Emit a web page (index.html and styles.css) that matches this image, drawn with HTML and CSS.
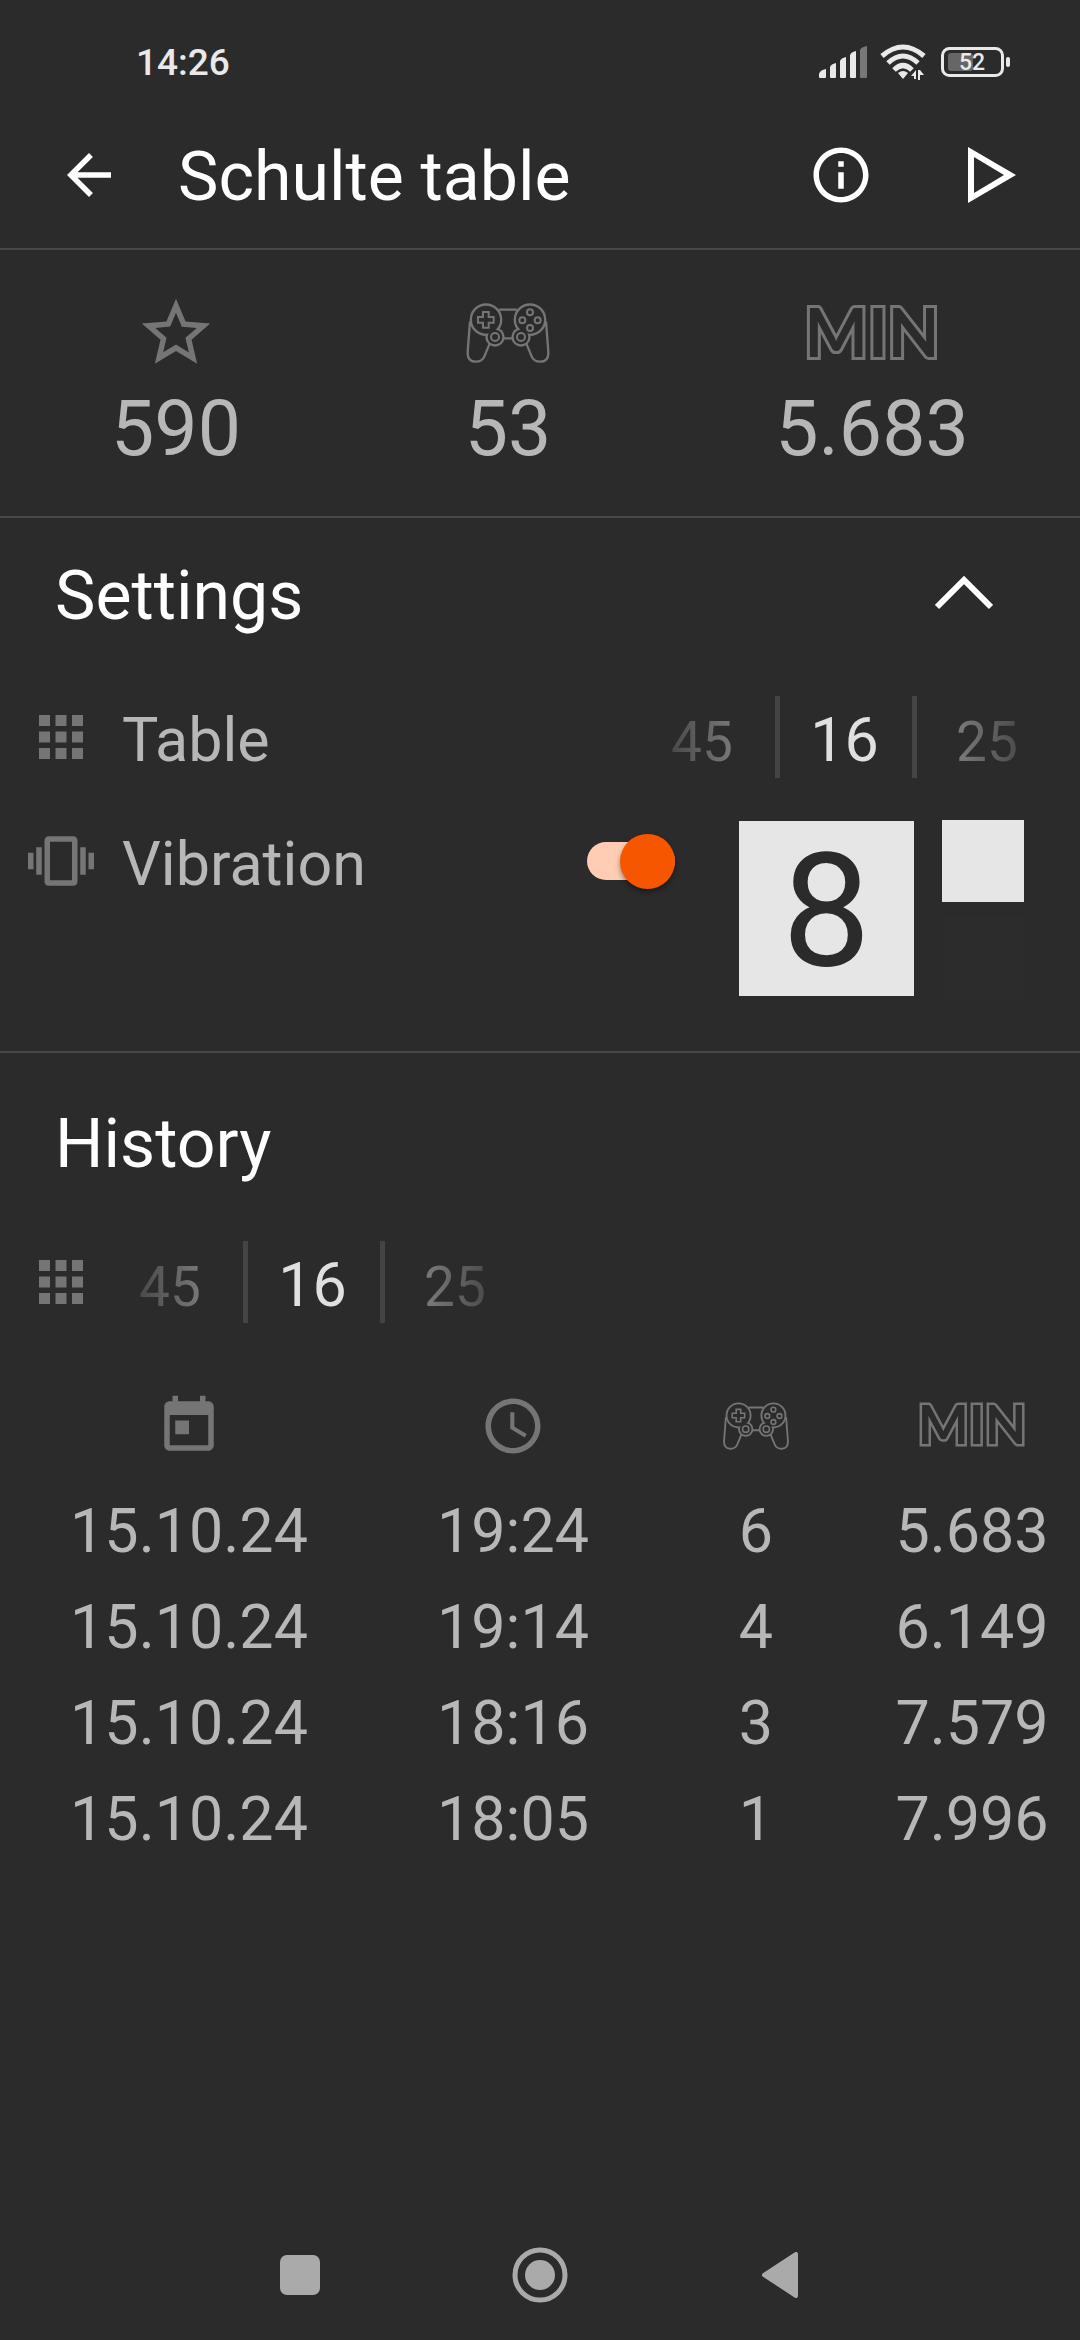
FILE: index.html
```html
<!DOCTYPE html>
<html lang="en">
<head>
<meta charset="utf-8">
<meta name="viewport" content="width=device-width, initial-scale=1">
<title>Schulte table</title>
<link rel="stylesheet" href="styles.css">
</head>
<body>
<svg class="defs" width="0" height="0" aria-hidden="true">
  <symbol id="apps" viewBox="0 0 24 24"><path d="M4 8h4V4H4v4zm6 12h4v-4h-4v4zm-6 0h4v-4H4v4zm0-6h4v-4H4v4zm6 0h4v-4h-4v4zm6-10v4h4V4h-4zm-6 4h4V4h-4v4zm6 6h4v-4h-4v4zm0 6h4v-4h-4v4z"/></symbol>
  <symbol id="gamepad" viewBox="0 0 250 180">
    <g fill="none" stroke="currentColor" stroke-width="7">
      <path d="M98 20h54M110 106h30"/>
      <path d="M11 56L4 146Q3 176 28 176Q48 176 54 160L70 122"/>
      <path d="M239 56L246 146Q247 176 222 176Q202 176 196 160L180 122"/>
    </g>
    <g fill="currentColor"><circle cx="59" cy="50" r="49"/><circle cx="191" cy="50" r="49"/><circle cx="86" cy="102" r="29"/><circle cx="164" cy="102" r="29"/></g>
    <g class="gamepad-hole"><circle cx="59" cy="50" r="42"/><circle cx="191" cy="50" r="42"/><circle cx="86" cy="102" r="22"/><circle cx="164" cy="102" r="22"/></g>
    <g fill="none" stroke="currentColor" stroke-width="6">
      <path d="M50 27h17v15h15v17H67v15H50V59H35V42h15z"/>
      <circle cx="86" cy="102" r="12"/><circle cx="164" cy="102" r="12"/>
      <circle cx="191" cy="28" r="9"/><circle cx="168" cy="52" r="9"/><circle cx="214" cy="52" r="9"/><circle cx="191" cy="75" r="9"/>
    </g>
  </symbol>
</svg>

<div class="screen">
  <header class="status">
    <span class="clock">14:26</span>
    <svg width="49" height="32" viewBox="0 0 49 32" aria-label="Signal">
      <g fill="#e9e9e9"><path d="M0 31v-3q1-4 7-5v8q0 1-1 1H1q-1 0-1-1z"/><path d="M11 31V21q1-3 6-4v14q0 1-1 1h-4q-1 0-1-1z"/><path d="M21 31V15q1-3 6-4v20q0 1-1 1h-4q-1 0-1-1z"/><path d="M31 31V9q1-3 6-4v26q0 1-1 1h-4q-1 0-1-1z"/></g>
      <path fill="#787878" d="M41 31V4q1-3 7-4v31q0 1-1 1h-5q-1 0-1-1z"/>
    </svg>
    <svg class="wifi" width="47" height="36" viewBox="0 0 47 36" aria-label="Wi-Fi">
      <g fill="none" stroke="#e9e9e9" stroke-width="5"><path d="M2 12Q23-6 44 12"/><path d="M8 19Q23 5 38 19"/><path d="M14 26Q23 17 32 26"/></g>
      <path fill="#e9e9e9" d="M18 29q5-4 10 0l-5 6z"/>
      <path fill="#e9e9e9" d="M31 32l5-6v9h-2v-3zM38 26h2v3h4l-4 0v7h-2zM40 26l4 5h-4z"/>
    </svg>
    <svg width="70" height="30" viewBox="0 0 70 30" role="img" aria-label="Battery">
      <rect x="1.500" y="1.500" width="60" height="27" rx="7" fill="none" stroke="#e9e9e9" stroke-width="3"/>
      <rect x="7" y="6" width="25" height="18" rx="3" fill="#666"/>
      <rect x="65" y="10" width="4" height="10" rx="2" fill="#e9e9e9"/>
      <text class="charge" x="31" y="23" text-anchor="middle">52</text>
    </svg>
  </header>

  <nav class="appbar">
    <button class="icon-btn" aria-label="Back"><svg class="i66" viewBox="0 0 24 24"><path d="M20 11H7.830l5.590-5.590L12 4l-8 8 8 8 1.410-1.410L7.830 13H20v-2z"/></svg></button>
    <h1>Schulte table</h1>
    <button class="icon-btn" aria-label="Info"><svg class="i66" viewBox="0 0 24 24"><path d="M11 7h2v2h-2zm0 4h2v6h-2zm1-9C6.480 2 2 6.480 2 12s4.480 10 10 10 10-4.480 10-10S17.520 2 12 2zm0 18c-4.410 0-8-3.590-8-8s3.590-8 8-8 8 3.590 8 8-3.590 8-8 8z"/></svg></button>
    <button class="icon-btn" aria-label="Play"><svg width="48" height="56" viewBox="0 0 48 56"><path fill-rule="evenodd" d="M0 0l48 28L0 56zM6 10v36l30-18z"/></svg></button>
  </nav>

  <section class="stats" aria-label="Statistics">
    <div class="stat"><div class="stat-icon"><svg width="82" height="82" viewBox="0 0 24 24"><path d="M22 9.240l-7.190-.62L12 2 9.190 8.630 2 9.240l5.460 4.730L5.820 21 12 17.270 18.180 21l-1.630-7.030L22 9.240zM12 15.400l-3.760 2.270 1-4.280-3.320-2.880 4.380-.38L12 6.100l1.710 4.040 4.380.38-3.320 2.880 1 4.280L12 15.400z"/></svg></div><div>590</div></div>
    <div class="stat"><div class="stat-icon"><svg width="84" height="60"><use href="#gamepad"/></svg></div><div>53</div></div>
    <div class="stat"><div class="stat-icon"><span class="min">MIN</span></div><div>5.683</div></div>
  </section>

  <section class="settings">
    <div class="heading">
      <h2>Settings</h2>
      <button class="icon-btn" aria-label="Collapse"><svg width="58" height="34" viewBox="0 0 58 34"><path fill="none" stroke="currentColor" stroke-width="6" d="M2 31L29 4l27 27"/></svg></button>
    </div>
    <div class="row">
      <svg class="i66"><use href="#apps"/></svg>
      <span class="label">Table</span>
      <div class="picker" role="group" aria-label="Table size">
        <button class="prev">45</button><button class="current" aria-pressed="true">16</button><button class="next">25</button>
      </div>
    </div>
    <div class="row row-last">
      <svg class="i66" viewBox="0 0 24 24"><path d="M0 15h2V9H0v6zm3 2h2V7H3v10zm19-8v6h2V9h-2zm-3 8h2V7h-2v10zM16.500 3h-9C6.670 3 6 3.670 6 4.500v15c0 .83.67 1.500 1.500 1.500h9c.83 0 1.500-.67 1.500-1.500v-15c0-.83-.67-1.500-1.500-1.500zM16 19H8V5h8v14z"/></svg>
      <label class="label" for="vibration">Vibration</label>
      <div class="switch-box"><input class="switch" type="checkbox" role="switch" id="vibration" checked></div>
      <div class="preview">8</div>
      <div class="swatches"><button class="swatch light" aria-label="Light"></button><button class="swatch dark" aria-label="Dark"></button></div>
    </div>
  </section>

  <section class="history">
    <div class="heading"><h2>History</h2></div>
    <div class="row">
      <svg class="i66"><use href="#apps"/></svg>
      <div class="picker" role="group" aria-label="History table size">
        <button class="prev">45</button><button class="current" aria-pressed="true">16</button><button class="next">25</button>
      </div>
    </div>
    <table>
      <colgroup><col class="c-date"><col class="c-time"><col class="c-games"><col class="c-min"></colgroup>
      <thead>
        <tr>
          <th aria-label="Date"><svg class="i66" viewBox="0 0 24 24"><path d="M19 3h-1V1h-2v2H8V1H6v2H5c-1.110 0-1.990.9-1.990 2L3 19c0 1.100.89 2 2 2h14c1.100 0 2-.9 2-2V5c0-1.100-.9-2-2-2zm0 16H5V8h14v11zM7 10h5v5H7v-5z"/></svg></th>
          <th aria-label="Time"><svg class="i66" viewBox="0 0 24 24"><path d="M11.990 2C6.470 2 2 6.480 2 12s4.470 10 9.990 10C17.520 22 22 17.520 22 12S17.520 2 11.990 2zM12 20c-4.420 0-8-3.580-8-8s3.580-8 8-8 8 3.580 8 8-3.580 8-8 8zm.5-13H11v6l5.250 3.150.75-1.230-4.500-2.670z"/></svg></th>
          <th aria-label="Games"><svg width="66" height="48"><use href="#gamepad"/></svg></th>
          <th><span class="min min-small">MIN</span></th>
        </tr>
      </thead>
      <tbody>
        <tr><td>15.10.24</td><td>19:24</td><td>6</td><td>5.683</td></tr>
        <tr><td>15.10.24</td><td>19:14</td><td>4</td><td>6.149</td></tr>
        <tr><td>15.10.24</td><td>18:16</td><td>3</td><td>7.579</td></tr>
        <tr><td>15.10.24</td><td>18:05</td><td>1</td><td>7.996</td></tr>
      </tbody>
    </table>
  </section>

  <footer class="sysnav">
    <button class="icon-btn" aria-label="Recents"><svg width="40" height="40"><rect width="40" height="40" rx="7"/></svg></button>
    <button class="icon-btn" aria-label="Home"><svg width="56" height="56" viewBox="0 0 56 56"><circle cx="28" cy="28" r="25" fill="none" stroke="currentColor" stroke-width="5"/><circle cx="28" cy="28" r="15"/></svg></button>
    <button class="icon-btn" aria-label="Back"><svg width="38" height="46" viewBox="0 0 38 46"><path stroke="currentColor" stroke-width="4" stroke-linejoin="round" d="M3 23L35 2v42z"/></svg></button>
  </footer>
</div>
</body>
</html>
```

FILE: styles.css
```css
:root {
  --bg: #2b2b2b;
  --line: #484848;
  --icon: #757575;
  --text: #b7b7b7;
}

* { box-sizing: border-box; }

body {
  margin: 0;
  background: var(--bg);
  color: var(--text);
  font-family: Roboto, "Liberation Sans", sans-serif;
}

.defs { display: none; }
svg { display: block; flex: none; fill: currentColor; }
.i66 { width: 66px; height: 66px; }
.gamepad-hole { fill: var(--bg); }

button {
  border: 0;
  padding: 0;
  background: none;
  color: inherit;
  font: inherit;
}

h1, h2 {
  margin: 0;
  color: #fff;
  font-size: 68px;
  line-height: 80px;
  font-weight: 400;
}

.icon-btn { display: grid; place-items: center; }

.screen {
  display: flex;
  flex-direction: column;
  min-height: 100vh;
}

/* System status bar */
.status {
  display: flex;
  align-items: center;
  height: 102px;
  padding: 22px 69px 0 136px;
  color: #e9e9e9;
}
.clock { flex: 1; font-size: 37px; line-height: 40px; font-weight: 500; padding-top: 2px; }
.wifi { margin: 0 14px 0 12px; }
.charge { fill: #e9e9e9; font-size: 23px; font-weight: 500; }

/* App bar */
.appbar {
  display: flex;
  align-items: center;
  height: 148px;
  padding: 0 64px 0 56px;
  border-bottom: 2px solid var(--line);
  color: #fff;
}
.appbar h1 { flex: 1; padding: 4px 0 0 56px; }
.appbar .icon-btn:last-child { margin-left: 94px; }

/* Totals */
.stats {
  display: grid;
  grid-template-columns: 352fr 312fr 416fr;
  padding: 42px 0;
  border-bottom: 2px solid var(--line);
}
.stat { text-align: center; font-size: 77px; line-height: 90px; }
.stat-icon {
  display: grid;
  place-items: center;
  height: 82px;
  margin-bottom: 10px;
  color: var(--icon);
}
/* Hollow lettering: the fill covers the inner half of the stroke */
.min {
  display: block;
  padding-bottom: 4px;
  color: var(--bg);
  font-family: Lato, Roboto, sans-serif;
  font-size: 67px;
  line-height: 76px;
  font-weight: 700;
  -webkit-text-stroke: 6px var(--icon);
  paint-order: stroke fill;
}
.min-small { font-size: 54px; line-height: 62px; -webkit-text-stroke-width: 5px; }

/* Sections */
.settings { padding-bottom: 52px; border-bottom: 2px solid var(--line); }
.heading {
  display: flex;
  align-items: center;
  justify-content: space-between;
  height: 156px;
  padding: 0 87px 0 55px;
}
.heading .icon-btn { color: #fff; margin-bottom: 6px; }
.history .heading { height: 181px; }
.row {
  display: flex;
  align-items: center;
  min-height: 82px;
  padding: 0 20px 0 28px;
  color: var(--icon);
}
.settings .row { margin-top: 22px; }
.settings .row-last {
  align-items: flex-start;
  margin-top: 42px;
  padding-right: 56px;
}
.row-last .i66 { margin-top: 8px; }
.label {
  flex: 1;
  padding: 6px 0 0 28px;
  color: var(--text);
  font-size: 61px;
  line-height: 76px;
}
.history .row { margin-top: 7px; }
.history .picker { margin-left: 6px; }

/* Horizontal number picker */
.picker { display: flex; height: 82px; font-size: 61px; }
.picker .current {
  width: 142px;
  padding: 5px 3px 0 0;
  border: solid #444;
  border-width: 0 5px;
  color: #e0e0e0;
}
.prev, .next {
  width: 143px;
  padding: 9px 3px 0 0;
  font-size: 55px;
  color: transparent;
  -webkit-background-clip: text;
  background-clip: text;
}
.prev { background-image: linear-gradient(to right, #2b2b2b, #999); }
.next { background-image: linear-gradient(to left, #2b2b2b, #999); }

.switch-box { display: flex; align-items: center; height: 82px; margin-right: 64px; }
.switch {
  appearance: none;
  display: flex;
  align-items: center;
  justify-content: flex-end;
  width: 88px;
  height: 38px;
  margin: 0;
  border-radius: 19px;
  background: #ffcdb3;
}
.switch::before {
  content: "";
  flex: none;
  width: 55px;
  height: 55px;
  border-radius: 50%;
  background: #f75600;
  box-shadow: 0 3px 5px rgba(0, 0, 0, .4);
}
.preview {
  width: 175px;
  height: 175px;
  margin: 1px 28px 0 0;
  background: #e6e6e6;
  color: #2b2b2b;
  font-size: 158px;
  line-height: 181px;
  text-align: center;
}
.swatches { display: grid; gap: 15px; }
.swatch { width: 82px; height: 82px; }
.light { background: #e6e6e6; }
.dark { background: #2c2c2c; }

/* Results */
table {
  width: 100%;
  margin-top: 45px;
  border-collapse: collapse;
  table-layout: fixed;
  font-size: 61px;
  text-align: center;
}
.c-date { width: 35%; }
.c-time { width: 25%; }
.c-games { width: 20%; }
.c-min { width: 20%; }
th, td { padding: 0; }
th { height: 115px; color: var(--icon); }
th svg { margin: 0 auto; }
td { height: 96px; line-height: 96px; }

/* System navigation */
.sysnav {
  display: grid;
  grid-template-columns: repeat(3, 240px);
  justify-content: center;
  height: 130px;
  margin-top: auto;
  color: #aaa;
}
```
